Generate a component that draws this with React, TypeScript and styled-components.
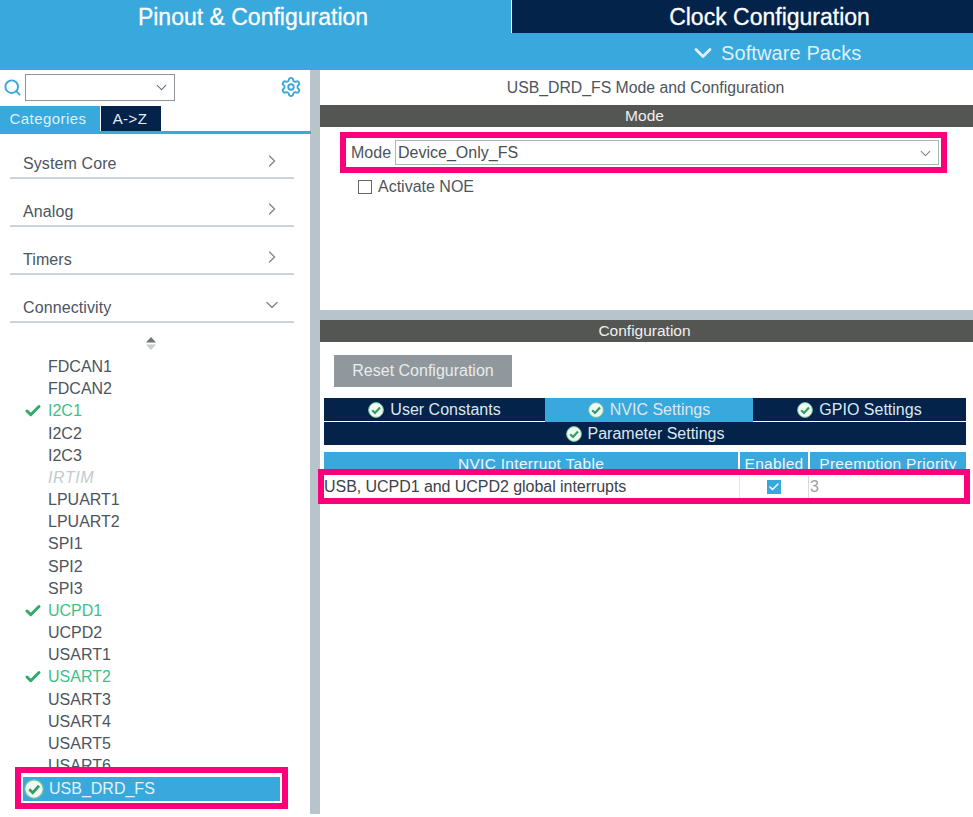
import React from 'react'
import styled, { createGlobalStyle } from 'styled-components'
import { ChevronDown, ChevronRight, Search, Settings, Check } from 'lucide-react'

const GlobalStyle = createGlobalStyle`
  html, body {
    margin: 0;
    padding: 0;
    background: #fff;
    font-family: "Liberation Sans", Arial, sans-serif;
  }
  * { box-sizing: border-box; }
`

const BLUE = '#39a8dc'
const NAVY = '#03234b'
const PINK = '#fb007a'
const TEXT = '#4c5560'

const Page = styled.div`
  width: 973px;
  height: 817px;
  overflow: hidden;
  display: flex;
  flex-direction: column;
`

const Header = styled.header`
  height: 70px;
  background: ${BLUE};
  display: flex;
  flex-direction: column;
`

const TopTabs = styled.div`
  height: 33px;
  display: flex;
`

const TopTab = styled.div<{ $active?: boolean }>`
  width: ${(p) => (p.$active ? '511px' : '462px')};
  background: ${(p) => (p.$active ? BLUE : NAVY)};
  border-left: ${(p) => (p.$active ? 'none' : '1px solid #fff')};
  padding: ${(p) => (p.$active ? '2px 5px 0 0' : '2px 0 0 54px')};
  color: #fff;
  font-size: 23px;
  -webkit-text-stroke: 0.3px #fff;
  display: flex;
  align-items: center;
  justify-content: center;
`

const PacksRow = styled.div`
  flex: 1;
  display: flex;
  align-items: center;
  padding: 3px 0 0 689px;
  gap: 4px;
  color: #dff1fa;
  font-size: 20px;
  letter-spacing: 0.1px;
`

const Body = styled.div`
  flex: 1;
  display: flex;
  align-items: flex-start;
  min-height: 0;
`

const Sidebar = styled.aside`
  width: 320px;
  height: 744px;
  border-right: 10px solid #b8c4cc;
  display: flex;
  flex-direction: column;
`

const SearchRow = styled.div`
  height: 36px;
  display: flex;
  align-items: center;
  padding: 0 8px 2px 3px;
  color: ${BLUE};
`

const SearchBox = styled.div`
  width: 150px;
  height: 27px;
  margin-left: 3px;
  border: 1px solid #8f9498;
  display: flex;
  align-items: center;
  justify-content: flex-end;
  padding-right: 4px;
  color: #6c747a;
`

const GearWrap = styled.div`
  margin-left: auto;
  display: flex;
`

const SideTabs = styled.div`
  height: 28px;
  display: flex;
  border-bottom: 3px solid ${BLUE};
  margin-right: -1px;
`

const SideTab = styled.div<{ $active?: boolean }>`
  width: ${(p) => (p.$active ? '100px' : '60px')};
  margin-left: ${(p) => (p.$active ? '0' : '1px')};
  padding: ${(p) => (p.$active ? '0 4px 1px 0' : '0 2px 1px 0')};
  background: ${(p) => (p.$active ? BLUE : NAVY)};
  color: ${(p) => (p.$active ? '#dff1fa' : '#e6ebf0')};
  font-size: 15px;
  letter-spacing: 0.45px;
  display: flex;
  align-items: center;
  justify-content: center;
`

const CategoryList = styled.div`
  display: flex;
  flex-direction: column;
  & > :first-child {
    height: 45px;
  }
`

const Category = styled.div`
  height: 48px;
  margin: 0 16px 0 10px;
  padding: 0 16px 0 13px;
  border-bottom: 2px solid #cbd3d9;
  display: flex;
  align-items: flex-end;
  justify-content: space-between;
  color: ${TEXT};
  font-size: 16px;
  letter-spacing: 0.1px;
  line-height: 26px;
`

const CategoryIcon = styled.span`
  display: flex;
  color: #7d8489;
  padding-bottom: 6px;
  margin-right: -4px;
`

const ScrollMark = styled.div`
  height: 33px;
  padding: 13px 0 0 146px;
  flex-shrink: 0;
`

const PeripheralList = styled.div`
  height: 417px;
  overflow: hidden;
  flex-shrink: 0;
`

const Peripheral = styled.div<{ $state?: 'on' | 'off' }>`
  height: 22.18px;
  line-height: 22px;
  padding-left: 48px;
  position: relative;
  font-size: 16px;
  color: ${(p) => (p.$state === 'on' ? '#3fbf86' : p.$state === 'off' ? '#c3cad0' : TEXT)};
  font-style: ${(p) => (p.$state === 'off' ? 'italic' : 'normal')};
  letter-spacing: ${(p) => (p.$state === 'off' ? '0.6px' : '0')};
`

const PeripheralCheck = styled.span`
  position: absolute;
  left: 24px;
  top: 2px;
  display: flex;
  color: #2faa6a;
`

const SelectedFrame = styled.div`
  width: 273px;
  height: 42px;
  margin: -6px 0 0 15px;
  position: relative;
  background: #fff;
  border: 6px solid ${PINK};
  padding: 4px 2px;
`

const SelectedItem = styled.div`
  height: 24px;
  background: ${BLUE};
  color: #e3f3fb;
  font-size: 16px;
  display: flex;
  align-items: center;
  gap: 5px;
  padding-left: 1px;
`

const Main = styled.main`
  flex: 1;
  display: flex;
  flex-direction: column;
  min-width: 0;
`

const MainTitle = styled.div`
  height: 35px;
  padding: 1px 2px 0 0;
  display: flex;
  align-items: center;
  justify-content: center;
  color: ${TEXT};
  font-size: 15.8px;
`

const SectionBar = styled.div`
  height: 22px;
  padding-right: 4px;
  background: #545653;
  color: #f0f0f0;
  font-size: 15.5px;
  display: flex;
  align-items: center;
  justify-content: center;
`

const ModeSection = styled.section`
  height: 193px;
  padding: 5px 26px 0 20px;
  flex-shrink: 0;
  border-bottom: 10px solid #b8c4cc;
`

const ModeFrame = styled.div`
  height: 41px;
  border: 6px solid ${PINK};
  display: flex;
  align-items: center;
  padding: 0 2px 0 5px;
  gap: 4px;
  color: ${TEXT};
  font-size: 16px;
`

const ModeSelect = styled.div`
  flex: 1;
  height: 25px;
  border: 1px solid #a9b6bb;
  display: flex;
  align-items: center;
  justify-content: space-between;
  padding: 1px 4px 0 2px;
  color: #4a4f55;
`

const CheckRow = styled.label`
  margin: 5px 0 0 18px;
  display: flex;
  align-items: center;
  gap: 6px;
  color: ${TEXT};
  font-size: 16px;
`

const CheckBox = styled.span`
  width: 14px;
  height: 14px;
  border: 1px solid #666;
`

const ConfigSection = styled.section`
  flex: 1;
  display: flex;
  flex-direction: column;
`

const ConfigBody = styled.div`
  padding: 13px 7px 0 4px;
`

const ResetButton = styled.button`
  display: block;
  width: 178px;
  height: 32px;
  margin-left: 10px;
  border: none;
  background: #90989d;
  color: #e8ecee;
  font-family: inherit;
  font-size: 16px;
  padding: 0;
`

const ConfigTabs = styled.div`
  margin-top: 11px;
  display: grid;
  grid-template-columns: 221px 208px 213px;
  grid-auto-rows: 24px;
  gap: 0;
`

const ConfigTab = styled.div<{ $active?: boolean; $wide?: boolean }>`
  grid-column: ${(p) => (p.$wide ? '1 / -1' : 'auto')};
  background: ${(p) => (p.$active ? BLUE : NAVY)};
  border: 1px solid ${(p) => (p.$active ? BLUE : '#fff')};
  border-width: 0 0 1px 0;
  color: #dfe7ee;
  font-size: 16px;
  display: flex;
  align-items: center;
  justify-content: center;
  gap: 6px;
`

const TabCheck = styled.svg`
  flex-shrink: 0;
`

const TableHead = styled.div`
  margin-top: 6px;
  height: 17px;
  display: grid;
  grid-template-columns: 414px 68px 1fr;
  gap: 2px;
`

const HeadCell = styled.div`
  height: 24px;
  background: ${BLUE};
  color: #eaf5fb;
  font-size: 15.5px;
  letter-spacing: 0.3px;
  line-height: 24px;
  text-align: center;
  white-space: nowrap;
  overflow: hidden;
`

const RowFrame = styled.div`
  margin: 0 -4px 0 -6px;
  height: 35px;
  padding-top: 1px;
  position: relative;
  border: 6px solid ${PINK};
  background: #fff;
  display: grid;
  grid-template-columns: 415px 70px 1fr;
  align-items: center;
  color: #3d4148;
  font-size: 16px;
  letter-spacing: -0.05px;
`

const RowName = styled.div`
  white-space: nowrap;
`

const RowEnabled = styled.div`
  height: 100%;
  border-left: 1px solid #e3e6e8;
  border-right: 1px solid #d6dadd;
  display: flex;
  align-items: center;
  justify-content: center;
`

const EnabledBox = styled.span`
  width: 14px;
  height: 14px;
  background: ${BLUE};
  color: #fff;
  display: flex;
  align-items: center;
  justify-content: center;
`

const RowPriority = styled.div`
  padding-left: 1px;
  color: #9aa1a6;
`

const categories = ['System Core', 'Analog', 'Timers']

const peripherals: { name: string; state?: 'on' | 'off' }[] = [
  { name: 'FDCAN1' },
  { name: 'FDCAN2' },
  { name: 'I2C1', state: 'on' },
  { name: 'I2C2' },
  { name: 'I2C3' },
  { name: 'IRTIM', state: 'off' },
  { name: 'LPUART1' },
  { name: 'LPUART2' },
  { name: 'SPI1' },
  { name: 'SPI2' },
  { name: 'SPI3' },
  { name: 'UCPD1', state: 'on' },
  { name: 'UCPD2' },
  { name: 'USART1' },
  { name: 'USART2', state: 'on' },
  { name: 'USART3' },
  { name: 'USART4' },
  { name: 'USART5' },
  { name: 'USART6' },
]

const OkIcon = ({ size = 16 }: { size?: number }): JSX.Element => (
  <TabCheck width={size} height={size} viewBox="0 0 16 16">
    <circle cx="8" cy="8" r="7.4" fill="#f2f9f5" stroke="#6cc596" strokeWidth="1" />
    <path d="M4.2 8.2 7 11 12 5.4" fill="none" stroke="#2f9e63" strokeWidth="2.2" />
  </TabCheck>
)

const App = (): JSX.Element => (
  <Page>
    <GlobalStyle />
    <Header>
      <TopTabs>
        <TopTab $active>Pinout &amp; Configuration</TopTab>
        <TopTab>Clock Configuration</TopTab>
      </TopTabs>
      <PacksRow>
        <ChevronDown size={28} strokeWidth={2.4} />
        Software Packs
      </PacksRow>
    </Header>
    <Body>
      <Sidebar>
        <SearchRow>
          <Search size={19} strokeWidth={2.4} />
          <SearchBox>
            <ChevronDown size={17} strokeWidth={1.5} />
          </SearchBox>
          <GearWrap>
            <Settings size={22} />
          </GearWrap>
        </SearchRow>
        <SideTabs>
          <SideTab $active>Categories</SideTab>
          <SideTab>A-&gt;Z</SideTab>
        </SideTabs>
        <CategoryList>
          {categories.map((name) => (
            <Category key={name}>
              {name}
              <CategoryIcon>
                <ChevronRight size={20} strokeWidth={1.5} />
              </CategoryIcon>
            </Category>
          ))}
          <Category>
            Connectivity
            <CategoryIcon>
              <ChevronDown size={20} strokeWidth={1.5} />
            </CategoryIcon>
          </Category>
        </CategoryList>
        <ScrollMark>
          <svg width="10" height="13" viewBox="0 0 10 13">
            <path d="M5 0 10 5.5H0Z" fill="#6f7478" />
            <path d="M0 7.5H10L5 13Z" fill="#c9cdd0" />
          </svg>
        </ScrollMark>
        <PeripheralList>
          {peripherals.map((p) => (
            <Peripheral key={p.name} $state={p.state}>
              {p.state === 'on' && (
                <PeripheralCheck>
                  <Check size={18} strokeWidth={4} />
                </PeripheralCheck>
              )}
              {p.name}
            </Peripheral>
          ))}
        </PeripheralList>
        <SelectedFrame>
          <SelectedItem>
            <OkIcon size={20} />
            USB_DRD_FS
          </SelectedItem>
        </SelectedFrame>
      </Sidebar>
      <Main>
        <MainTitle>USB_DRD_FS Mode and Configuration</MainTitle>
        <SectionBar>Mode</SectionBar>
        <ModeSection>
          <ModeFrame>
            Mode
            <ModeSelect>
              Device_Only_FS
              <ChevronDown size={17} strokeWidth={1.5} color="#7d8489" />
            </ModeSelect>
          </ModeFrame>
          <CheckRow>
            <CheckBox />
            Activate NOE
          </CheckRow>
        </ModeSection>
        <ConfigSection>
          <SectionBar>Configuration</SectionBar>
          <ConfigBody>
            <ResetButton>Reset Configuration</ResetButton>
            <ConfigTabs>
              <ConfigTab>
                <OkIcon />
                User Constants
              </ConfigTab>
              <ConfigTab $active>
                <OkIcon />
                NVIC Settings
              </ConfigTab>
              <ConfigTab>
                <OkIcon />
                GPIO Settings
              </ConfigTab>
              <ConfigTab $wide>
                <OkIcon />
                Parameter Settings
              </ConfigTab>
            </ConfigTabs>
            <TableHead>
              <HeadCell>NVIC Interrupt Table</HeadCell>
              <HeadCell>Enabled</HeadCell>
              <HeadCell>Preemption Priority</HeadCell>
            </TableHead>
            <RowFrame>
              <RowName>USB, UCPD1 and UCPD2 global interrupts</RowName>
              <RowEnabled>
                <EnabledBox>
                  <Check size={12} strokeWidth={3} />
                </EnabledBox>
              </RowEnabled>
              <RowPriority>3</RowPriority>
            </RowFrame>
          </ConfigBody>
        </ConfigSection>
      </Main>
    </Body>
  </Page>
)

export default App
